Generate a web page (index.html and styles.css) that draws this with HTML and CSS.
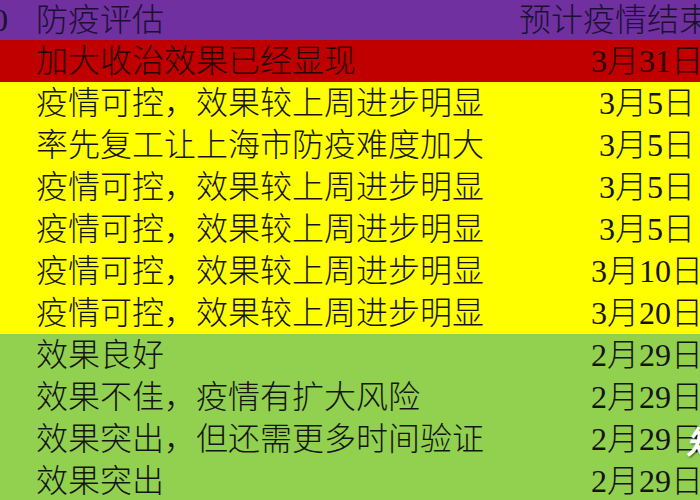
FILE: index.html
```html
<!DOCTYPE html>
<html lang="zh-CN">
<head>
<meta charset="utf-8">
<title>防疫评估</title>
<link rel="stylesheet" href="styles.css">
</head>
<body>
<div class="sheet">
  <div class="row head">
    <div class="c0">0</div>
    <div class="c1">防疫评估</div>
    <div class="c2">预计疫情结束时间</div>
  </div>
  <div class="row red">
    <div class="c0"></div>
    <div class="c1">加大收治效果已经显现</div>
    <div class="c2">3月31日</div>
  </div>
  <div class="row yellow">
    <div class="c0"></div>
    <div class="c1">疫情可控，效果较上周进步明显</div>
    <div class="c2">3月5日</div>
  </div>
  <div class="row yellow">
    <div class="c0"></div>
    <div class="c1">率先复工让上海市防疫难度加大</div>
    <div class="c2">3月5日</div>
  </div>
  <div class="row yellow">
    <div class="c0"></div>
    <div class="c1">疫情可控，效果较上周进步明显</div>
    <div class="c2">3月5日</div>
  </div>
  <div class="row yellow">
    <div class="c0"></div>
    <div class="c1">疫情可控，效果较上周进步明显</div>
    <div class="c2">3月5日</div>
  </div>
  <div class="row yellow">
    <div class="c0"></div>
    <div class="c1">疫情可控，效果较上周进步明显</div>
    <div class="c2">3月10日</div>
  </div>
  <div class="row yellow">
    <div class="c0"></div>
    <div class="c1">疫情可控，效果较上周进步明显</div>
    <div class="c2">3月20日</div>
  </div>
  <div class="row green">
    <div class="c0"></div>
    <div class="c1">效果良好</div>
    <div class="c2">2月29日</div>
  </div>
  <div class="row green">
    <div class="c0"></div>
    <div class="c1">效果不佳，疫情有扩大风险</div>
    <div class="c2">2月29日</div>
  </div>
  <div class="row green">
    <div class="c0"></div>
    <div class="c1">效果突出，但还需更多时间验证</div>
    <div class="c2">2月29日</div>
  </div>
  <div class="row green">
    <div class="c0"></div>
    <div class="c1">效果突出</div>
    <div class="c2">2月29日</div>
  </div>
</div>
<div class="watermark">知</div>
</body>
</html>
```
FILE: styles.css
```css
html, body {
  margin: 0;
  padding: 0;
  width: 700px;
  height: 500px;
  overflow: hidden;
  background: #92d050;
}
.sheet {
  width: 797px;
  font-family: "Liberation Serif", "Noto Sans CJK SC", serif;
  font-size: 32px;
  font-weight: 300;
  color: #141414;
}
.row {
  display: grid;
  grid-template-columns: 20px 477px 300px;
  height: 42px;
  line-height: 42px;
  white-space: nowrap;
}
.row.head {
  height: 40px;
  line-height: 40px;
  background: #7030a0;
  color: #1a1030;
}
.red { background: #c00000; color: #2a0000; }
.yellow { background: #ffff00; }
.green { background: #92d050; }
.c0 {
  text-align: right;
  padding-right: 12px;
  direction: rtl;
  overflow: visible;
}
.c1 {
  padding-left: 16px;
}
.c2 {
  text-align: center;
}
.watermark {
  position: absolute;
  left: 686px;
  top: 420px;
  font-family: "Noto Sans CJK SC", sans-serif;
  font-size: 32px;
  font-weight: 700;
  font-style: italic;
  color: #ffffff;
  text-shadow: 1px 1px 2px rgba(0, 0, 0, 0.6);
  line-height: 40px;
}
```
